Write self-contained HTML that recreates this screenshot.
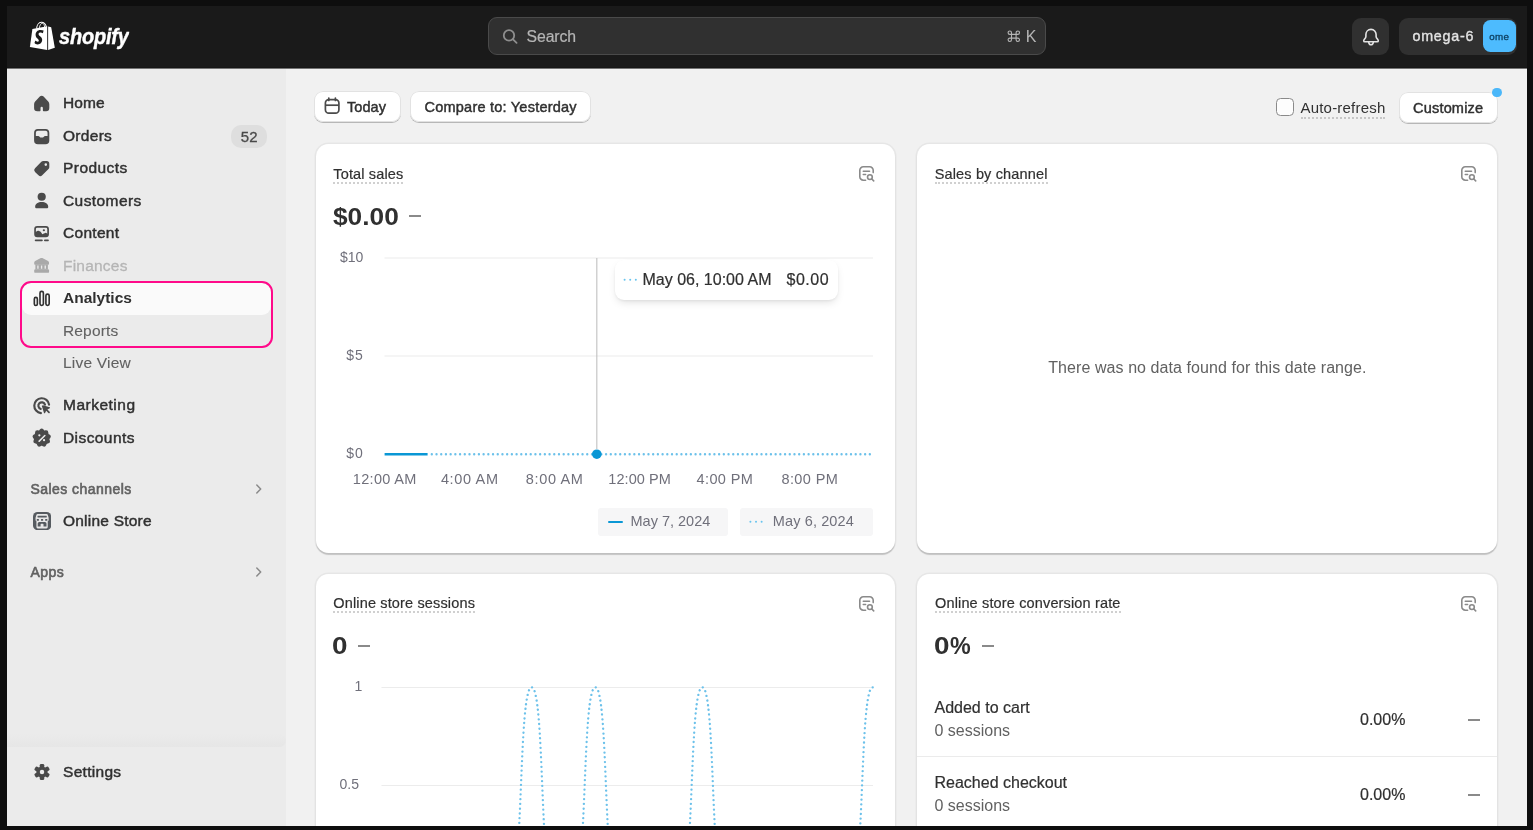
<!DOCTYPE html>
<html>
<head>
<meta charset="utf-8">
<title>Analytics</title>
<style>
*{box-sizing:border-box;margin:0;padding:0}
html,body{width:1533px;height:830px;overflow:hidden;font-family:"Liberation Sans",sans-serif;color:#303030}
html{background:#f1f1f1}
body{position:relative;background:transparent;will-change:transform}
body>div,body>svg{position:absolute}
.bd{background:#0e0e0e;z-index:50}
/* topbar */
#topbar{left:0;top:0;width:1533px;height:69px;background:linear-gradient(#1a1a1a 0,#1a1a1a 67px,#161616 67px,#161616 68px,#747474 68px,#747474 69px)}
#search{left:488px;top:17px;width:558px;height:38px;background:#303030;border:1px solid #4a4a4a;border-radius:9px}
#search .txt{position:absolute;left:37.500px;top:10.400px;font-size:15.800px;color:#b5b5b5;letter-spacing:-.08px;-webkit-text-stroke:.2px #b5b5b5;line-height:18px}
#search .kbd{position:absolute;left:536.700px;top:9.900px;font-size:16px;color:#b5b5b5;line-height:18px}
#bell{left:1352px;top:18px;width:37px;height:37px;background:#303030;border-radius:9px}
#store{left:1399px;top:18px;width:118px;height:37px;background:#303030;border-radius:9px}
#store .nm{position:absolute;left:13.500px;top:9.300px;font-size:14.300px;line-height:18px;color:#e3e3e3;-webkit-text-stroke:.35px #e3e3e3;letter-spacing:.75px}
#store .av{position:absolute;left:83.700px;top:2.100px;width:33px;height:32.400px;background:#4dbbfe;border-radius:7.500px;font-size:9.800px;letter-spacing:.35px;color:#0c3c5c;text-align:center;line-height:34.500px;-webkit-text-stroke:.3px #0c3c5c}
/* sidebar */
#side{left:0;top:69px;width:286px;height:761px;background:#ebebeb}
.nav{left:63px;font-size:15.5px;color:#303030;-webkit-text-stroke:.45px #303030;white-space:nowrap;line-height:20px;letter-spacing:.1px}
.nav.sub{color:#616161;-webkit-text-stroke:.1px #616161}
.nav.dis{color:#b5b5b5;-webkit-text-stroke:.3px #b5b5b5}
.sec{left:30.5px;letter-spacing:.45px;font-size:14px;color:#616161;-webkit-text-stroke:.6px #616161;white-space:nowrap;line-height:20px}
.ico{left:31px;width:20px;height:20px}
.ico svg{width:20px;height:20px;display:block}
#badge{left:231.200px;top:124.700px;width:36px;height:23.300px;border-radius:10px;background:#dedede;font-size:15px;color:#4a4a4a;text-align:center;line-height:23.500px;-webkit-text-stroke:.3px #4a4a4a}
#hl{left:19.800px;top:281.300px;width:252.900px;height:66.600px;border:2.200px solid #ff0a8a;border-radius:11px}
#sel{left:22px;top:283px;width:249px;height:32px;background:#fafafa;border-radius:9px}
/* main */
.btn{height:31px;background:#fff;border-radius:9px;box-shadow:0 1px 0 0 #b7b7b7,0 0 0 1px #e2e2e2 inset;font-size:14.500px;color:#303030;-webkit-text-stroke:.45px #303030;line-height:32px;white-space:nowrap;overflow:hidden}
.card{background:#fff;border-radius:12.500px;box-shadow:0 1.200px 1px 0 rgba(0,0,0,.17),0 0 0 1.500px rgba(0,0,0,.045)}
.ttl{-webkit-text-stroke:.2px #303030;font-size:14.5px;color:#303030;line-height:17px;height:18px;white-space:nowrap;border-bottom:2px dotted #d0d0d0;letter-spacing:.15px}
.big{font-size:24px;font-weight:bold;color:#303030;white-space:nowrap;line-height:28px}
.dash{height:2px;background:#8a8a8a;width:12px}
.ax{font-size:14px;color:#70707b;white-space:nowrap;line-height:16px}
.t{white-space:nowrap}
.lg{background:#f6f6f7;border-radius:3px}
.lgl{width:15px;height:2.4px;border-radius:2px;background:#0a97d5}
.lt{color:#70707b;font-size:14.5px}
.xl{font-size:14.5px}
#tip{background:#fff;border-radius:9px;box-shadow:0 4px 8px -2px rgba(0,0,0,.13),0 1px 3px rgba(0,0,0,.06)}
.tp{font-size:16px;color:#303030;line-height:20px;-webkit-text-stroke:.2px #303030}
.nd{font-size:16px;color:#616161;line-height:20px}
.rw{font-size:16px;color:#303030;line-height:20px;-webkit-text-stroke:.2px #303030}
.rs{font-size:16px;color:#616161;line-height:20px}
.ic{overflow:visible}
#wm{font-size:22.5px;font-weight:bold;font-style:italic;color:#fff;line-height:28px;letter-spacing:-.2px;transform-origin:0 0;transform:scaleX(.915)}
#cb{background:#fdfdfd;border:1px solid #8a8a8a;border-radius:4.500px}
#ar{font-size:15px;color:#303030;line-height:18px;border-bottom:2px dotted #c6c6c6}
#bdot{background:#4bb7f9;border-radius:50%}
</style>
</head>
<body>
<!-- TOPBAR -->
<div id="topbar"></div>
<div id="search"><span class="txt">Search</span><span class="kbd">K</span></div>
<div id="bell"></div>
<div id="store"><span class="nm">omega-6</span><div class="av">ome</div></div>
<!-- SIDEBAR -->
<div id="side"></div>
<div id="sel"></div>
<div id="hl"></div>
<div class="nav" style="top:93px;letter-spacing:0.10px">Home</div>
<div class="nav" style="top:126px;letter-spacing:0.30px">Orders</div>
<div id="badge">52</div>
<div class="nav" style="top:158px;letter-spacing:0.45px">Products</div>
<div class="nav" style="top:191px;letter-spacing:0.42px">Customers</div>
<div class="nav" style="top:223px;letter-spacing:0.30px">Content</div>
<div class="nav dis" style="top:256px;letter-spacing:0.22px">Finances</div>
<div class="nav" style="top:288px;font-weight:bold;-webkit-text-stroke:0;letter-spacing:0px">Analytics</div>
<div class="nav sub" style="top:321px;letter-spacing:0.15px">Reports</div>
<div class="nav sub" style="top:353px;letter-spacing:0.20px">Live View</div>
<div class="nav" style="top:395px;letter-spacing:0.50px">Marketing</div>
<div class="nav" style="top:428px;letter-spacing:0.42px">Discounts</div>
<div class="sec" style="top:479px">Sales channels</div>
<div class="nav" style="top:511px;letter-spacing:0.22px">Online Store</div>
<div class="sec" style="top:562px">Apps</div>
<div class="nav" style="top:762px;letter-spacing:0.30px">Settings</div>
<!-- ICONS -->
<svg id="bag" style="left:29px;top:20px" width="28" height="32" viewBox="29 20 28 32">
  <path d="M32.4 28.9 L47.2 26.3 L47.2 50 L29.9 46.9 Z" fill="#fff"/>
  <path d="M48.1 26.4 L51.2 27.3 L54.8 47.7 L48.1 49.9 Z" fill="#fff"/>
  <path d="M36.6 28.6 C36.8 25.2 38.8 22.4 41.3 22.3 C43.6 22.2 45.6 24.3 46.4 26.9" fill="none" stroke="#fff" stroke-width="1.1"/>
  <path d="M39.3 28 C39.6 25.3 41 23.3 42.4 23.2 C43.5 23.2 44.3 24.6 44.6 27" fill="none" stroke="#fff" stroke-width="0.9"/>
  <path d="M42.9 33.2 C41.9 32.7 40.9 32.5 40.1 32.6 C38.9 32.8 38.4 33.6 38.6 34.4 C39 36.2 42.3 36.4 42.2 40 C42.1 42.7 40 44.5 37.6 44.4 C36.2 44.3 35 43.7 34.5 43 L35.3 40.6 C36 41.2 37 41.8 37.9 41.7 C38.6 41.6 38.9 41 38.8 40.5 C38.6 38.4 35.7 38.2 35.6 34.9 C35.5 32.1 37.5 29.8 40.6 29.9 C41.9 29.9 42.9 30.2 43.6 30.6 Z" fill="#1a1a1a"/>
</svg>
<svg id="wm" style="left:56px;top:20px" width="80" height="34" viewBox="56 20 80 34"><text x="59.300" y="44.100" font-family="Liberation Sans, sans-serif" font-size="22.500" font-weight="bold" font-style="italic" fill="#fff" stroke="#fff" stroke-width=".45" textLength="76.200" lengthAdjust="spacingAndGlyphs">shopify</text></svg>
<svg style="left:500px;top:26px" width="20" height="20" viewBox="500 26 20 20" fill="none" stroke="#8e8e8e" stroke-width="1.800" stroke-linecap="round"><circle cx="509" cy="35.400" r="5.200"/><path d="M513 39.3 L516.6 42.8"/></svg>
<svg style="left:1007px;top:30px" width="14" height="14" viewBox="0 0 14 14" fill="none" stroke="#b5b5b5" stroke-width="1.100"><path d="M4.500 2.700a1.700 1.700 0 1 0-1.700 1.700H10.800a1.700 1.700 0 1 0-1.700-1.700V9.800a1.700 1.700 0 1 0 1.700-1.700H2.800a1.700 1.700 0 1 0 1.700 1.700Z"/></svg>
<svg style="left:1360px;top:26px" width="22" height="22" viewBox="1360 26 22 22" fill="none" stroke="#e3e3e3" stroke-width="1.6" stroke-linejoin="round" stroke-linecap="round"><path d="M1371 29.4 C1367.9 29.4 1365.9 31.8 1365.9 34.6 L1365.9 36.4 C1365.9 38.2 1363.7 39.6 1363.7 40.7 C1363.7 41.4 1364.2 41.8 1364.9 41.8 L1377.1 41.8 C1377.8 41.8 1378.3 41.4 1378.3 40.7 C1378.3 39.6 1376.1 38.2 1376.1 36.4 L1376.1 34.6 C1376.1 31.8 1374.1 29.4 1371 29.4 Z"/><path d="M1368.7 42.4 C1368.9 43.8 1369.8 44.8 1371 44.8 C1372.2 44.8 1373.1 43.8 1373.3 42.4"/></svg>
<svg class="ic" style="left:30.2px;top:91.5px" width="23.4" height="23.4" viewBox="0 0 20 20" fill="#4a4a4a" ><path d="M10 3.1c-.62 0-1.2.26-1.62.71L4.4 8.1c-.58.62-.9 1.44-.9 2.3v3.35A2.75 2.75 0 0 0 6.25 16.5h1.9c.47 0 .85-.38.85-.85V13.6a1 1 0 0 1 2 0v2.05c0 .47.38.85.85.85h1.9a2.75 2.75 0 0 0 2.75-2.75V10.4c0-.86-.32-1.68-.9-2.3l-3.98-4.29A2.2 2.2 0 0 0 10 3.1Z"/></svg>
<svg class="ic" style="left:30.2px;top:124.5px" width="23.4" height="23.4" viewBox="0 0 20 20" fill="#4a4a4a" ><path fill-rule="evenodd" d="M6.75 3.5A3.25 3.25 0 0 0 3.5 6.75v6.5a3.25 3.25 0 0 0 3.25 3.25h6.5a3.25 3.25 0 0 0 3.25-3.25v-6.5a3.25 3.25 0 0 0-3.25-3.25h-6.5Zm-1.75 3.25c0-.97.78-1.75 1.75-1.75h6.5c.97 0 1.75.78 1.75 1.75V9.5h-2.1c-.4 0-.78.16-1.06.44l-.7.7c-.1.1-.22.15-.36.15H9.22a.5.5 0 0 1-.36-.15l-.7-.7a1.5 1.5 0 0 0-1.06-.44H5V6.75Z"/></svg>
<svg class="ic" style="left:30.2px;top:156.6px" width="23.4" height="23.4" viewBox="0 0 20 20" fill="#4a4a4a" ><path fill-rule="evenodd" d="M11.3 3.5h2.95a2.25 2.25 0 0 1 2.25 2.25V8.7c0 .6-.24 1.17-.66 1.59l-5.4 5.4a2.25 2.25 0 0 1-3.18 0L4.3 12.74a2.25 2.25 0 0 1 0-3.18l5.4-5.4c.43-.42 1-.66 1.6-.66Zm2.2 4.1a1.1 1.1 0 1 0 0-2.2 1.1 1.1 0 0 0 0 2.2Z"/></svg>
<svg class="ic" style="left:30.2px;top:189.4px" width="23.4" height="23.4" viewBox="0 0 20 20" fill="#4a4a4a" ><circle cx="10" cy="6.6" r="3.5"/><path d="M4.4 15.3c0-2.5 2.5-4.1 5.6-4.1s5.6 1.6 5.6 4.1c0 .68-.55 1.2-1.2 1.2H5.6c-.65 0-1.2-.52-1.2-1.2Z"/></svg>
<svg class="ic" style="left:30.2px;top:222.1px" width="23.4" height="23.4" viewBox="0 0 20 20" fill="#4a4a4a" ><path fill-rule="evenodd" d="M6.200 3.450A2.600 2.600 0 0 0 3.600 6.050v4.450A2.600 2.600 0 0 0 6.200 13.100h7.400a2.600 2.600 0 0 0 2.600-2.600V6.050a2.600 2.600 0 0 0-2.600-2.600H6.200ZM5.050 6.100a1.150 1.150 0 0 1 1.150-1.150h7.400a1.150 1.150 0 0 1 1.150 1.150v4q-.700-.900-1.700-.800-1.100.100-2.500 1.250-1.200-2.700-3.250-3.050-1.250-.150-2.250 1.050Z"/><circle cx="11.850" cy="7.050" r=".95"/><rect x="4.050" y="14.950" width="6.900" height="1.500" rx=".75"/><rect x="11.950" y="14.950" width="4.200" height="1.500" rx=".75"/></svg>
<svg class="ic" style="left:30.2px;top:253.9px" width="23.4" height="23.4" viewBox="0 0 20 20" fill="#a9a9a9" ><path d="M9.250 3.500a1.400 1.400 0 0 1 1.300 0l4.900 2.550c.500.260.800.760.800 1.300v.900c0 .500-.400.850-.900.850H4.500c-.500 0-.900-.350-.900-.850v-.900c0-.540.300-1.040.800-1.300l4.850-2.550Z"/><path fill-rule="evenodd" d="M4.600 9.050h10.700v4.100H4.600zM6.200 9.800v2.850h1.150V9.800zM9.330 9.800v2.850h1.150V9.800zM12.450 9.800v2.850h1.150V9.800z"/><rect x="3.600" y="13.100" width="12.700" height="3" rx="1"/></svg>
<svg class="ic" style="left:30.2px;top:287.1px" width="23.4" height="23.4" viewBox="0 0 20 20" fill="#4a4a4a" ><g fill="none" stroke="#303030" stroke-width="1.4"><rect x="3.700" y="8.900" width="2.600" height="6.900" rx="1.300"/><rect x="8.550" y="3.700" width="2.900" height="12.100" rx="1.400"/><rect x="13.600" y="6.100" width="2.800" height="9.700" rx="1.400"/></g></svg>
<svg class="ic" style="left:30.2px;top:393.7px" width="23.4" height="23.4" viewBox="0 0 20 20" fill="#4a4a4a" ><g fill="none" stroke="#4a4a4a" stroke-width="1.850" stroke-linecap="round"><path d="M16.300 9.100A6.350 6.350 0 1 0 9.300 16.300"/><path d="M12.800 9.100A2.900 2.900 0 1 0 9.200 12.800"/></g><path d="M10.800 9.900c-.400-.130-.750.220-.620.620l1.800 5.700c.130.420.720.460.900.060l.950-2 1.900 1.900c.300.300.750.300 1.050 0s.300-.750 0-1.050l-1.900-1.900 2-.950c.400-.180.360-.770-.060-.900l-5.700-1.800Z"/></svg>
<svg class="ic" style="left:30.2px;top:426.1px" width="23.4" height="23.4" viewBox="0 0 20 20" fill="#4a4a4a" ><path fill-rule="evenodd" d="M11.600 3.050a2.100 2.100 0 0 0-3.200 0l-.450.550a.6.600 0 0 1-.550.200l-.700-.100a2.100 2.100 0 0 0-2.400 2.050l-.050.700a.6.600 0 0 1-.300.500l-.600.400a2.100 2.100 0 0 0-.550 3.100l.450.550a.6.600 0 0 1 .100.600l-.250.650a2.100 2.100 0 0 0 1.600 2.750l.700.150a.6.600 0 0 1 .450.400l.250.650a2.100 2.100 0 0 0 2.950 1.100l.650-.350a.6.600 0 0 1 .600 0l.650.350a2.100 2.100 0 0 0 2.950-1.100l.250-.650a.6.600 0 0 1 .450-.400l.700-.150a2.100 2.100 0 0 0 1.600-2.750l-.250-.650a.6.600 0 0 1 .100-.600l.450-.550a2.100 2.100 0 0 0-.550-3.100l-.600-.400a.6.600 0 0 1-.300-.500l-.050-.700a2.100 2.100 0 0 0-2.400-2.050l-.700.100a.6.600 0 0 1-.550-.200l-.450-.550Zm1.550 4.650a.65.650 0 0 1 0 .900l-5 5a.65.650 0 0 1-.900-.900l5-5a.65.650 0 0 1 .900 0ZM8 8.900a.95.950 0 1 0 0-1.900.95.950 0 0 0 0 1.900Zm4 4.200a.95.950 0 1 0 0-1.900.95.950 0 0 0 0 1.900Z"/></svg>
<svg class="ic" style="left:31.560px;top:762.370px" width="20" height="20" viewBox="-10 -10 20 20" fill="#4a4a4a"><circle r="5.600"/><rect x="-2.250" y="-8.050" width="4.500" height="16.100" rx="1.400" transform="rotate(0)"/><rect x="-2.250" y="-8.050" width="4.500" height="16.100" rx="1.400" transform="rotate(60)"/><rect x="-2.250" y="-8.050" width="4.500" height="16.100" rx="1.400" transform="rotate(120)"/><circle r="2.250" fill="#ebebeb"/></svg>
<svg style="left:32.700px;top:512.100px" width="18.200" height="18.200" viewBox="0 0 18.200 18.200"><rect width="18.200" height="18.200" rx="4.600" fill="#565b60"/><path fill="#e7e7e7" d="M4.600 1.900h9a1.200 1.200 0 0 1 1.150.850l.900 3v2.200a1.300 1.300 0 0 1-.900 1.250v5.900a1.300 1.300 0 0 1-1.300 1.300h-8.700a1.300 1.300 0 0 1-1.300-1.300v-5.900a1.300 1.300 0 0 1-.900-1.250v-2.200l.900-3a1.200 1.200 0 0 1 1.150-.850z"/><rect x="4.500" y="3.750" width="9.300" height="1.750" rx=".4" fill="#565b60"/><rect x="3.75" y="7" width="2.150" height="1.750" rx=".3" fill="#565b60"/><rect x="8.0" y="7" width="2.150" height="1.750" rx=".3" fill="#565b60"/><rect x="12.2" y="7" width="2.150" height="1.750" rx=".3" fill="#565b60"/><path fill="#565b60" d="M4.700 14.600v-3a1.600 1.600 0 0 1 1.600-1.600h5.600a1.600 1.600 0 0 1 1.600 1.600v3h-3v-2.300a.6.600 0 0 0-.6-.6h-1.700a.6.600 0 0 0-.6.600v2.300z"/></svg>
<svg style="left:252px;top:481.9px" width="14" height="14" viewBox="0 0 14 14" fill="none" stroke="#8a8a8a" stroke-width="1.500" stroke-linecap="round" stroke-linejoin="round"><path d="M4.800 3 L8.700 7 L4.800 11"/></svg>
<svg style="left:252px;top:565.4px" width="14" height="14" viewBox="0 0 14 14" fill="none" stroke="#8a8a8a" stroke-width="1.500" stroke-linecap="round" stroke-linejoin="round"><path d="M4.800 3 L8.700 7 L4.800 11"/></svg>
<div style="left:7px;top:734px;width:279px;height:13px;border-radius:0 8px 8px 0;background:linear-gradient(#ebebeb,#e6e6e6)"></div>
<!-- MAIN -->
<div class="btn" id="b-today" style="left:313.900px;top:90.600px;width:86.700px;padding-left:33.100px;letter-spacing:.05px">Today</div>
<div class="btn" id="b-cmp" style="left:410.400px;top:90.600px;width:180.400px;padding-left:14.100px;letter-spacing:.23px">Compare to: Yesterday</div>
<div class="btn" id="b-cust" style="left:1398.800px;top:91.800px;width:99.200px;padding-left:14.300px;letter-spacing:.18px">Customize</div>
<div class="card" id="c1" style="left:315.600px;top:144.100px;width:579.700px;height:408.700px"></div>
<div class="card" id="c2" style="left:916.900px;top:144.100px;width:579.700px;height:408.700px"></div>
<div class="card" id="c3" style="left:315.600px;top:573.900px;width:579.700px;height:300px"></div>
<div class="card" id="c4" style="left:916.900px;top:573.900px;width:579.700px;height:300px"></div>
<svg style="left:322px;top:96px" width="20" height="20" viewBox="322 96 20 20" fill="none" stroke="#4a4a4a" stroke-width="1.700"><rect x="325.400" y="99.700" width="13.500" height="13.500" rx="3.400"/><path d="M325.400 105.200H338.900"/><path d="M328.800 98V100.500M335.400 98V100.500" stroke-linecap="round"/></svg>
<div id="cb" style="left:1276.200px;top:98.100px;width:17.900px;height:18.300px"></div>
<div class="t" id="ar" style="left:1300.500px;top:99px;letter-spacing:.2px">Auto-refresh</div>
<div id="bdot" style="left:1492.300px;top:87.500px;width:9.800px;height:9.800px"></div>
<svg style="left:857px;top:164px" width="20" height="20" viewBox="-2 -2 20 20" fill="none" stroke="#8a8a8a" stroke-width="1.600" stroke-linecap="round"><path d="M6.600 14.200H4.300A3.500 3.500 0 0 1 0.800 10.700V4.300A3.500 3.500 0 0 1 4.300 0.800H10.700A3.500 3.500 0 0 1 14.200 4.300V6.600"/><path d="M4.300 5.200H10.500M4.300 8.500H6.600"/><circle cx="10.900" cy="11.100" r="2.400"/><path d="M12.800 13 L14.700 14.900"/></svg>
<svg style="left:1458.5px;top:164px" width="20" height="20" viewBox="-2 -2 20 20" fill="none" stroke="#8a8a8a" stroke-width="1.600" stroke-linecap="round"><path d="M6.600 14.200H4.300A3.500 3.500 0 0 1 0.800 10.700V4.300A3.500 3.500 0 0 1 4.300 0.800H10.700A3.500 3.500 0 0 1 14.200 4.300V6.600"/><path d="M4.300 5.200H10.500M4.300 8.500H6.600"/><circle cx="10.900" cy="11.100" r="2.400"/><path d="M12.800 13 L14.700 14.900"/></svg>
<svg style="left:857px;top:594px" width="20" height="20" viewBox="-2 -2 20 20" fill="none" stroke="#8a8a8a" stroke-width="1.600" stroke-linecap="round"><path d="M6.600 14.200H4.300A3.500 3.500 0 0 1 0.800 10.700V4.300A3.500 3.500 0 0 1 4.300 0.800H10.700A3.500 3.500 0 0 1 14.200 4.300V6.600"/><path d="M4.300 5.200H10.500M4.300 8.500H6.600"/><circle cx="10.900" cy="11.100" r="2.400"/><path d="M12.800 13 L14.700 14.900"/></svg>
<svg style="left:1458.5px;top:594px" width="20" height="20" viewBox="-2 -2 20 20" fill="none" stroke="#8a8a8a" stroke-width="1.600" stroke-linecap="round"><path d="M6.600 14.200H4.300A3.500 3.500 0 0 1 0.800 10.700V4.300A3.500 3.500 0 0 1 4.300 0.800H10.700A3.500 3.500 0 0 1 14.200 4.300V6.600"/><path d="M4.300 5.200H10.500M4.300 8.500H6.600"/><circle cx="10.900" cy="11.100" r="2.400"/><path d="M12.800 13 L14.700 14.900"/></svg>
<!-- CARD 1: Total sales -->
<div class="ttl t" id="t1" style="left:333.300px;top:166.100px">Total sales</div>
<div class="big t" id="v1" style="left:333px;top:203.300px;transform-origin:0 0;transform:scaleX(1.095)">$0.00</div>
<div class="dash" style="left:409px;top:215px"></div>
<svg id="ch1" style="left:314px;top:143px" width="581" height="410" viewBox="314 143 581 410">
  <line x1="384.5" y1="258" x2="873" y2="258" stroke="#ececec" stroke-width="1.2"/>
  <line x1="384.5" y1="356" x2="873" y2="356" stroke="#ececec" stroke-width="1.2"/>
  <line x1="596.8" y1="258" x2="596.8" y2="449" stroke="#c6c6c6" stroke-width="1.2"/>
  <line x1="431.800" y1="454.200" x2="873.500" y2="454.200" stroke="#6cc1ea" stroke-width="2.350" stroke-linecap="round" stroke-dasharray="0.01 4.700"/>
  <line x1="384.600" y1="454.200" x2="427.600" y2="454.200" stroke="#0a97d5" stroke-width="2.400" stroke-linecap="butt"/>
  <circle cx="596.8" cy="454.2" r="4.8" fill="#0a97d5"/>
</svg>
<div class="ax t" style="left:340px;top:249px">$10</div>
<div class="ax t" style="left:346.300px;top:347px;letter-spacing:.9px">$5</div>
<div class="ax t" style="left:346.300px;top:445.300px;letter-spacing:.9px">$0</div>
<div class="ax xl t" style="left:352.800px;top:471.300px;letter-spacing:.33px">12:00 AM</div>
<div class="ax xl t" style="left:440.900px;top:471.300px;letter-spacing:.65px">4:00 AM</div>
<div class="ax xl t" style="left:525.800px;top:471.300px;letter-spacing:.65px">8:00 AM</div>
<div class="ax xl t" style="left:608.300px;top:471.300px;letter-spacing:.06px">12:00 PM</div>
<div class="ax xl t" style="left:696.600px;top:471.300px;letter-spacing:.37px">4:00 PM</div>
<div class="ax xl t" style="left:781.500px;top:471.300px;letter-spacing:.38px">8:00 PM</div>
<div class="lg" style="left:598px;top:508px;width:130px;height:28px"></div>
<div class="lg" style="left:740px;top:508px;width:133px;height:28px"></div>
<div class="lgl" style="left:607.5px;top:520.6px"></div>
<svg style="left:748px;top:518px" width="20" height="8" viewBox="0 0 20 8"><line x1="2.4" y1="3.8" x2="16" y2="3.8" stroke="#68c4ee" stroke-width="2" stroke-linecap="round" stroke-dasharray="0.01 5.6"/></svg>
<div class="ax lt t" style="left:630.5px;top:513px">May 7, 2024</div>
<div class="ax lt t" style="left:772.800px;top:513px;letter-spacing:.12px">May 6, 2024</div>
<div id="tip" style="left:615px;top:260px;width:223px;height:40px"></div>
<svg style="left:622px;top:276px" width="20" height="8" viewBox="0 0 20 8"><line x1="2.6" y1="3.8" x2="16" y2="3.8" stroke="#68c4ee" stroke-width="2" stroke-linecap="round" stroke-dasharray="0.01 5.6"/></svg>
<div class="tp t" id="tp1" style="left:642.5px;top:270px">May 06, 10:00 AM</div>
<div class="tp t" id="tp2" style="left:786.500px;top:270px;letter-spacing:.5px">$0.00</div>
<!-- CARD 2: Sales by channel -->
<div class="ttl t" id="t2" style="left:934.700px;top:166.100px">Sales by channel</div>
<div class="nd t" id="nd" style="left:1048.200px;top:358px;letter-spacing:.08px">There was no data found for this date range.</div>
<!-- CARD 3: Online store sessions -->
<div class="ttl t" id="t3" style="left:333.300px;top:594.600px">Online store sessions</div>
<div class="big t" id="v3" style="left:332.200px;top:631.900px;transform-origin:0 0;transform:scaleX(1.160)">0</div>
<div class="dash" style="left:357.500px;top:644.800px"></div>
<svg id="ch3" style="left:314px;top:573px" width="581" height="257" viewBox="314 573 581 257">
  <line x1="381.5" y1="687.5" x2="873" y2="687.5" stroke="#ececec" stroke-width="1.2"/>
  <line x1="381.5" y1="785.5" x2="873" y2="785.5" stroke="#ececec" stroke-width="1.2"/>
  <g fill="none" stroke="#6cc1ea" stroke-width="2.350" stroke-linecap="round" stroke-dasharray="0.01 4.740">
    <path d="M510.35 883.0 C523.52 883.0 518.43 687.3 531.60 687.3 C544.77 687.3 539.68 883.0 552.85 883.0"/>
    <path d="M574.05 883.0 C587.22 883.0 582.12 687.3 595.30 687.3 C608.47 687.3 603.38 883.0 616.55 883.0"/>
    <path d="M681.05 883.0 C694.22 883.0 689.12 687.3 702.30 687.3 C715.47 687.3 710.38 883.0 723.55 883.0"/>
    <path d="M872.70 687.3 C859.53 687.3 864.62 883.0 851.45 883.0"/>
  </g>
</svg>
<div class="ax t" style="left:354.5px;top:678px">1</div>
<div class="ax t" style="left:339.5px;top:776px">0.5</div>
<!-- CARD 4: Conversion rate -->
<div class="ttl t" id="t4" style="left:935px;top:594.600px">Online store conversion rate</div>
<div class="big t" id="v4" style="left:933.700px;top:631.900px;transform-origin:0 0;transform:scaleX(1.160)">0</div><div class="big t" id="v4b" style="left:950.200px;top:631.900px;transform-origin:0 0;transform:scaleX(.97)">%</div>
<div class="dash" style="left:981.800px;top:644.800px"></div>
<div class="rw t" id="r1" style="left:934.5px;top:698px">Added to cart</div>
<div class="rs t" id="s1" style="left:934.5px;top:721px">0 sessions</div>
<div class="rw t" id="p1" style="left:1360px;top:710px">0.00%</div>
<div class="dash" style="left:1467.5px;top:718.5px"></div>
<div style="left:917px;top:756px;width:580px;height:1px;background:#ebebeb"></div>
<div class="rw t" id="r2" style="left:934.5px;top:773px">Reached checkout</div>
<div class="rs t" id="s2" style="left:934.5px;top:796px">0 sessions</div>
<div class="rw t" id="p2" style="left:1360px;top:785px">0.00%</div>
<div class="dash" style="left:1467.5px;top:793.5px"></div>
<!-- FRAME BORDERS (overlay) -->
<div class="bd" style="left:0;top:0;width:1533px;height:6px"></div>
<div class="bd" style="left:0;top:826px;width:1533px;height:4px"></div>
<div class="bd" style="left:0;top:0;width:7px;height:830px"></div>
<div class="bd" style="left:1527px;top:0;width:6px;height:830px"></div>
</body>
</html>
